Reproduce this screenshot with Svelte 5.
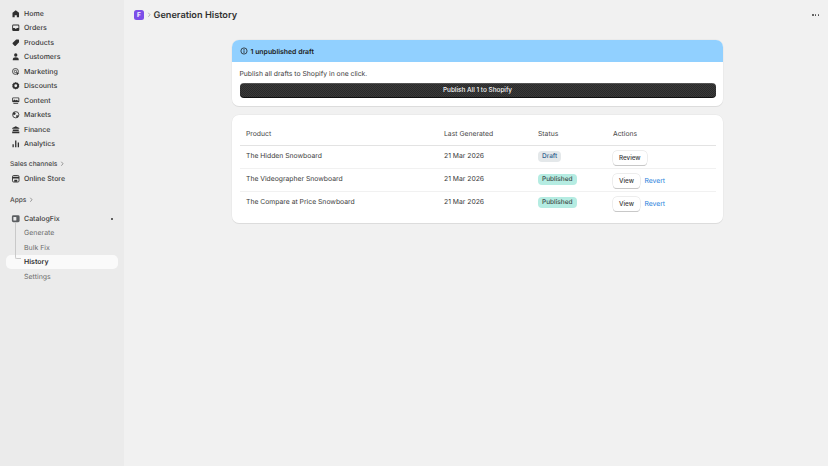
<script>
    const navItems = [
        { label: "Home", icon: "home" },
        { label: "Orders", icon: "orders" },
        { label: "Products", icon: "products" },
        { label: "Customers", icon: "customers" },
        { label: "Marketing", icon: "marketing" },
        { label: "Discounts", icon: "discounts" },
        { label: "Content", icon: "content" },
        { label: "Markets", icon: "markets" },
        { label: "Finance", icon: "finance" },
        { label: "Analytics", icon: "analytics" }
    ];

    const subItems = ["Generate", "Bulk Fix", "History", "Settings"];

    const rows = [
        { product: "The Hidden Snowboard", date: "21 Mar 2026", status: "Draft", action: "Review" },
        { product: "The Videographer Snowboard", date: "21 Mar 2026", status: "Published", action: "View", revert: true },
        { product: "The Compare at Price Snowboard", date: "21 Mar 2026", status: "Published", action: "View", revert: true }
    ];
</script>

{#snippet navIcon(name)}
    <svg class="nav-icon" viewBox="0 0 16 16" fill="#303030">
        {#if name === "home"}
            <path d="M8 2 2.500 6.500V14h3.700v-3.600h3.600V14h3.700V6.500z" />
        {:else if name === "orders"}
            <path fill-rule="evenodd" d="M4 2.500h8A2 2 0 0 1 14 4.500v7a2 2 0 0 1-2 2H4a2 2 0 0 1-2-2v-7a2 2 0 0 1 2-2zM3.500 4.500v4h2.800l.8 1.300h1.800l.8-1.300h2.800v-4a.5.5 0 0 0-.5-.5H4a.5.5 0 0 0-.5.5z" />
        {:else if name === "products"}
            <path d="M9 2.500h3.500a1 1 0 0 1 1 1V7a1 1 0 0 1-.3.700L8 13a1.500 1.500 0 0 1-2.100 0L3 10.100A1.500 1.500 0 0 1 3 8l5.300-5.200A1 1 0 0 1 9 2.500z" />
        {:else if name === "customers"}
            <circle cx="8" cy="5" r="2.800" />
            <path d="M3 14v-1.500C3 10.300 5 9 8 9s5 1.300 5 3.500V14z" />
        {:else if name === "marketing"}
            <circle cx="7.500" cy="7.500" r="5" fill="none" stroke="#303030" stroke-width="1.400" />
            <circle cx="7.500" cy="7.500" r="2" fill="none" stroke="#303030" stroke-width="1.300" />
            <path d="m8.500 8.500 5.500 2-2 1-1 2.200z" />
        {:else if name === "discounts"}
            <path fill-rule="evenodd" d="M8 1.800l1.700 1.100 2-.1.700 1.900 1.600 1.200-.6 2.100.6 2.100-1.600 1.200-.7 1.900-2-.1L8 14.200l-1.700-1.100-2 .1-.7-1.900L2 10.100l.6-2.100L2 5.900l1.600-1.200.7-1.900 2 .1zM8 5.600a2.400 2.400 0 1 0 0 4.800 2.400 2.400 0 0 0 0-4.800z" />
        {:else if name === "content"}
            <path fill-rule="evenodd" d="M3.500 2.500h9a1.500 1.500 0 0 1 1.500 1.500v5a1.500 1.500 0 0 1-1.500 1.500h-9A1.500 1.500 0 0 1 2 9V4a1.500 1.500 0 0 1 1.500-1.500zm0 1.300V8l2.500-2 2 1.500 1.500-1 3 2V3.800z" />
            <path d="M4 12h8v1.300H4z" />
        {:else if name === "markets"}
            <circle cx="8" cy="8" r="5.300" fill="none" stroke="#303030" stroke-width="1.400" />
            <path d="M5 3.500 8 5 7 8l-2.500.5L3 6.500zM9 8.500l3.500 1-2 3.500-1.500-.5z" />
        {:else if name === "finance"}
            <path d="M8 2 14 5v1.500H2V5zM3 7.500h10V10H3zM2 11h12v3H2z" />
        {:else if name === "analytics"}
            <path d="M2.500 9h2.200v5H2.500zM6.900 2.500h2.200V14H6.900zM11.300 6h2.200v8h-2.200z" />
        {/if}
    </svg>
{/snippet}

<div class="page">
    <aside class="sidebar">
        <nav class="nav-main">
            {#each navItems as item}
                <div class="nav-item">
                    {@render navIcon(item.icon)}
                    <span>{item.label}</span>
                </div>
            {/each}
        </nav>

        <div class="section-title sales">
            Sales channels
            <svg class="chev" viewBox="0 0 6 8"><path d="m2 1 2.500 3L2 7" /></svg>
        </div>
        <div class="nav-item">
            <svg class="nav-icon" viewBox="0 0 16 16">
                <rect x="2.500" y="2.500" width="11" height="11" rx="2" fill="none" stroke="#303030" stroke-width="1.500" />
                <path d="M2.500 4.500h11v3h-11zM5.500 9.500h5V13h-5z" fill="#303030" />
            </svg>
            <span>Online Store</span>
        </div>

        <div class="section-title apps">
            Apps
            <svg class="chev" viewBox="0 0 6 8"><path d="m2 1 2.500 3L2 7" /></svg>
        </div>

        <div class="app-head nav-item">
            <svg class="nav-icon" viewBox="0 0 16 16">
                <rect x="1.500" y="2" width="13" height="12" rx="2.500" fill="#5c5f62" />
                <rect x="4" y="5" width="5" height="6" rx="1" fill="#ebebeb" />
            </svg>
            <span>CatalogFix</span>
            <i class="pin"></i>
        </div>
        <div class="sub-list">
            <span class="tree-line"></span>
            {#each subItems as sub}
                <div class="sub-item" class:active={sub === "History"}>{sub}</div>
            {/each}
        </div>
    </aside>

    <main class="main">
        <header class="topbar">
            <div class="app-logo">F</div>
            <svg class="crumb" viewBox="0 0 6 8"><path d="m2 1 2.500 3L2 7" /></svg>
            <h1>Generation History</h1>
            <div class="more">
                <i></i><i></i><i></i>
            </div>
        </header>

        <div class="content">
            <section class="card">
                <div class="banner">
                    <svg class="info" viewBox="0 0 16 16">
                        <circle cx="8" cy="8" r="6.200" fill="none" stroke="#1a1a1a" stroke-width="1.500" />
                        <path d="M8 7.300v4" stroke="#1a1a1a" stroke-width="1.500" stroke-linecap="round" />
                        <circle cx="8" cy="5" r="1" fill="#1a1a1a" />
                    </svg>
                    <span>1 unpublished draft</span>
                </div>
                <div class="banner-body">
                    <p>Publish all drafts to Shopify in one click.</p>
                    <button class="publish">Publish All 1 to Shopify</button>
                </div>
            </section>

            <section class="card table-card">
                <table>
                    <thead>
                        <tr>
                            <th class="c-product">Product</th>
                            <th class="c-date">Last Generated</th>
                            <th class="c-status">Status</th>
                            <th>Actions</th>
                        </tr>
                    </thead>
                    <tbody>
                        {#each rows as row}
                            <tr>
                                <td>{row.product}</td>
                                <td>{row.date}</td>
                                <td>
                                    <span class="badge" class:published={row.status === "Published"}>{row.status}</span>
                                </td>
                                <td>
                                    <div class="actions">
                                        <button class="btn">{row.action}</button>
                                        {#if row.revert}
                                            <span class="revert">Revert</span>
                                        {/if}
                                    </div>
                                </td>
                            </tr>
                        {/each}
                    </tbody>
                </table>
            </section>
        </div>
    </main>
</div>

<style>
    :global(body) {
        margin: 0;
        font-family: Inter, "Liberation Sans", sans-serif;
        color: #303030;
        text-rendering: geometricPrecision;
    }

    .page {
        display: flex;
        width: 828px;
        height: 466px;
        overflow: hidden;
        background: #f1f1f1;
        font-size: 6.800px;
    }

    /* Sidebar */
    .sidebar {
        width: 124px;
        flex-shrink: 0;
        box-sizing: border-box;
        padding: 6px 6px 0;
        background: #ebebeb;
    }

    .nav-item {
        display: flex;
        align-items: center;
        gap: 4px;
        height: 14.500px;
        padding-left: 4.500px;
        font-size: 7px;
        font-weight: 450;
        color: #3a3a3a;
    }

    .nav-icon {
        width: 9.500px;
        height: 9.500px;
        flex-shrink: 0;
    }

    .section-title {
        display: flex;
        align-items: center;
        gap: 3px;
        height: 14.500px;
        padding-left: 4px;
        font-size: 6.600px;
        font-weight: 450;
        color: #4a4a4a;
    }

    .sales {
        margin-top: 5.500px;
    }

    .apps {
        margin-top: 7px;
    }

    .chev {
        width: 4px;
        height: 5.500px;
        fill: none;
        stroke: #616161;
        stroke-width: 0.900;
    }

    .app-head {
        position: relative;
        margin-top: 4px;
    }

    .pin {
        position: absolute;
        right: 5px;
        top: 6.500px;
        width: 2px;
        height: 2px;
        border-radius: 50%;
        background: #303030;
    }

    .sub-list {
        position: relative;
    }

    .tree-line {
        position: absolute;
        left: 8.500px;
        top: -3px;
        width: 6px;
        height: 36px;
        box-sizing: border-box;
        border-left: 1.500px solid #c9c9c9;
        border-bottom: 1px solid #c9c9c9;
        border-bottom-left-radius: 2px;
    }

    .sub-item {
        display: flex;
        align-items: center;
        height: 14.500px;
        padding-left: 18px;
        font-size: 7px;
        font-weight: 400;
        color: #6b6b6b;
    }

    .sub-item.active {
        background: #fafafa;
        border-radius: 5px;
        font-weight: 600;
        color: #303030;
    }

    /* Top bar */
    .main {
        flex: 1;
        min-width: 0;
    }

    .topbar {
        display: flex;
        align-items: center;
        height: 30px;
        padding: 0 9px 0 10px;
    }

    .app-logo {
        display: flex;
        align-items: center;
        justify-content: center;
        width: 10px;
        height: 10px;
        border-radius: 2.500px;
        background: #7c4ee8;
        color: #fff;
        font-size: 6.500px;
        font-weight: 700;
    }

    .crumb {
        width: 4px;
        height: 5.500px;
        margin: 0 3px 0 2.500px;
        fill: none;
        stroke: #8a8a8a;
        stroke-width: 0.900;
    }

    h1 {
        margin: 0;
        font-size: 9.200px;
        font-weight: 600;
        color: #303030;
    }

    .more {
        display: flex;
        gap: 1.200px;
        margin-left: auto;
    }

    .more i {
        width: 1.500px;
        height: 1.500px;
        border-radius: 50%;
        background: #4a4a4a;
    }

    /* Cards */
    .content {
        display: flex;
        flex-direction: column;
        gap: 9px;
        width: 491px;
        margin: 10px 0 0 108px;
    }

    .card {
        overflow: hidden;
        border-radius: 7px;
        background: #fff;
        box-shadow: 0 1px 0 #dcdcdc, 0 0 0 0.500px #e6e6e6;
    }

    .banner {
        display: flex;
        align-items: center;
        gap: 3px;
        height: 22px;
        padding-left: 7.500px;
        background: #91d0ff;
        font-size: 6.900px;
        font-weight: 600;
        color: #202020;
    }

    .info {
        width: 8px;
        height: 8px;
    }

    .banner-body {
        padding: 7px 7.500px 9px;
    }

    .banner-body p {
        margin: 0 0 5px;
        line-height: 9px;
        color: #3a3a3a;
    }

    .publish {
        display: block;
        width: 100%;
        height: 14px;
        padding: 0;
        border: none;
        border-radius: 4px;
        background-color: #303030;
        background-image: repeating-conic-gradient(#2a2a2a 0 25%, #3a3a3a 0 50%);
        background-size: 2px 2px;
        box-shadow: 0 1px 0 #111, inset 0 0.500px 0 #777;
        color: #f4f4f4;
        font: 500 6.400px Inter, "Liberation Sans", sans-serif;
    }

    /* Table */
    .table-card {
        padding: 7px 7.500px 8px;
    }

    table {
        width: 100%;
        border-collapse: collapse;
        table-layout: fixed;
    }

    th,
    td {
        box-sizing: border-box;
        padding: 0 0 0 6.500px;
        text-align: left;
        vertical-align: top;
        font-weight: 400;
        color: #3a3a3a;
    }

    th {
        height: 23px;
        line-height: 23px;
        border-bottom: 0.800px solid #e3e3e3;
        color: #444;
    }

    td {
        height: 23.200px;
        padding-top: 5px;
        line-height: 10px;
        border-bottom: 0.800px solid #f1f1f1;
    }

    tbody tr:last-child td {
        border-bottom: none;
    }

    .c-product {
        width: 198px;
    }

    .c-date {
        width: 94px;
    }

    .c-status {
        width: 75px;
    }

    .badge {
        display: inline-block;
        padding: 0 4px;
        border-radius: 4px;
        background: #e4e8ea;
        font-size: 6.500px;
        font-weight: 450;
        line-height: 10.500px;
        color: #2f5f8f;
    }

    .badge.published {
        background: #b5ece2;
        color: #3d4a47;
    }

    .actions {
        display: flex;
        align-items: center;
        gap: 4.500px;
        margin-top: -0.500px;
    }

    .btn {
        height: 14px;
        padding: 0 6px;
        border: none;
        border-radius: 4px;
        background: #fff;
        box-shadow: 0 0 0 0.500px #dcdcdc, 0 1px 0 #b5b5b5;
        color: #3a3a3a;
        font: 450 6.300px Inter, "Liberation Sans", sans-serif;
    }

    .revert {
        color: #2a7fdb;
        font-size: 6.800px;
    }
</style>
